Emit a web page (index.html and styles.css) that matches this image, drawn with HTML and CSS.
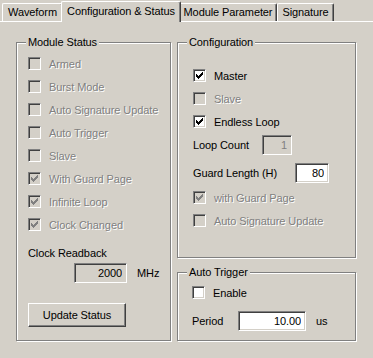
FILE: index.html
```html
<!DOCTYPE html>
<html lang="en">
<head>
    <meta charset="UTF-8">
    <meta name="viewport" content="width=device-width, initial-scale=1.0">
    <title>Configuration &amp; Status</title>
    <link rel="stylesheet" href="styles.css">
</head>
<body>
    <div class="tabs">
        <div class="tab tab-wave">Waveform</div>
        <div class="tab tab-conf active">Configuration &amp; Status</div>
        <div class="tab tab-mod">Module Parameter</div>
        <div class="tab tab-sig">Signature</div>
    </div>

    <div class="page">
        <div class="group status">
            <span class="legend">Module Status</span>
            <div class="check off"><span class="box"></span>Armed</div>
            <div class="check off"><span class="box"></span>Burst Mode</div>
            <div class="check off"><span class="box"></span>Auto Signature Update</div>
            <div class="check off"><span class="box"></span>Auto Trigger</div>
            <div class="check off"><span class="box"></span>Slave</div>
            <div class="check off"><span class="box"><svg class="tick" width="7" height="7" viewBox="0 0 7 7"><path d="M0 2h1v3H0zM1 3h1v3H1zM2 4h1v3H2zM3 3h1v3H3zM4 2h1v3H4zM5 1h1v3H5zM6 0h1v3H6z"/></svg></span>With Guard Page</div>
            <div class="check off"><span class="box"><svg class="tick" width="7" height="7" viewBox="0 0 7 7"><path d="M0 2h1v3H0zM1 3h1v3H1zM2 4h1v3H2zM3 3h1v3H3zM4 2h1v3H4zM5 1h1v3H5zM6 0h1v3H6z"/></svg></span>Infinite Loop</div>
            <div class="check off"><span class="box"><svg class="tick" width="7" height="7" viewBox="0 0 7 7"><path d="M0 2h1v3H0zM1 3h1v3H1zM2 4h1v3H2zM3 3h1v3H3zM4 2h1v3H4zM5 1h1v3H5zM6 0h1v3H6z"/></svg></span>Clock Changed</div>

            <div class="readback-label">Clock Readback</div>
            <div class="readback-row">
                <input class="field readonly" id="clockReadback" type="text" value="2000" readonly>
                <span class="unit">MHz</span>
            </div>
            <button class="btn" onclick="updateStatus()">Update Status</button>
        </div>

        <div class="col">
            <div class="group config">
                <span class="legend">Configuration</span>
                <div class="check"><span class="box on"><svg class="tick" width="7" height="7" viewBox="0 0 7 7"><path d="M0 2h1v3H0zM1 3h1v3H1zM2 4h1v3H2zM3 3h1v3H3zM4 2h1v3H4zM5 1h1v3H5zM6 0h1v3H6z"/></svg></span>Master</div>
                <div class="check off"><span class="box"></span>Slave</div>
                <div class="check"><span class="box on"><svg class="tick" width="7" height="7" viewBox="0 0 7 7"><path d="M0 2h1v3H0zM1 3h1v3H1zM2 4h1v3H2zM3 3h1v3H3zM4 2h1v3H4zM5 1h1v3H5zM6 0h1v3H6z"/></svg></span>Endless Loop</div>
                <div class="field-row loop-row">
                    <span class="field-label loop-label">Loop Count</span>
                    <input class="field disabled loop-field" type="text" value="1" readonly>
                </div>
                <div class="field-row guard-row">
                    <span class="field-label guard-label">Guard Length (H)</span>
                    <input class="field guard-field" type="text" value="80">
                </div>
                <div class="check off guard-page"><span class="box"><svg class="tick" width="7" height="7" viewBox="0 0 7 7"><path d="M0 2h1v3H0zM1 3h1v3H1zM2 4h1v3H2zM3 3h1v3H3zM4 2h1v3H4zM5 1h1v3H5zM6 0h1v3H6z"/></svg></span>with Guard Page</div>
                <div class="check off"><span class="box"></span>Auto Signature Update</div>
            </div>

            <div class="group trigger">
                <span class="legend">Auto Trigger</span>
                <div class="check"><span class="box on"></span>Enable</div>
                <div class="field-row period-row">
                    <span class="field-label period-label">Period</span>
                    <input class="field period-field" type="text" value="10.00">
                    <span class="unit">us</span>
                </div>
            </div>
        </div>
    </div>

    <script>
    function updateStatus() {
        document.getElementById('clockReadback').value = '2000';
    }
    </script>
</body>
</html>
```

FILE: styles.css
```css
body {
    font-family: 'Liberation Sans', Arial, sans-serif;
    font-size: 11px;
    letter-spacing: -0.1px;
    color: #000;
    background-color: #d4d0c8;
    margin: 0;
    padding: 0;
    width: 373px;
    height: 358px;
    overflow: hidden;
}

/* tab strip */
.tabs {
    display: flex;
    align-items: flex-end;
    height: 21px;
    padding-left: 2px;
}

.tab {
    box-sizing: border-box;
    height: 18px;
    border-left: 1px solid #fff;
    border-top: 1px solid #fff;
    border-right: 1px solid #404040;
    border-radius: 2px 2px 0 0;
    box-shadow: inset -1px 0 0 #808080;
    text-align: center;
    line-height: 17px;
    white-space: nowrap;
    background-color: #d4d0c8;
}

.tab-wave { width: 61px; }
.tab-conf { width: 116px; }
.tab-mod { width: 98px; }
.tab-sig { width: 57px; }

.tab.active {
    position: relative;
    z-index: 1;
    width: 120px;
    height: 21px;
    margin: 0 -2px -1px -2px;
    line-height: 19px;
}

.page {
    border-top: 1px solid #fff;
    display: flex;
    gap: 6px;
    padding: 20px 0 0 16px;
}

/* etched group boxes */
.group {
    position: relative;
    box-sizing: border-box;
    border: 1px solid #808080;
    box-shadow: inset 1px 1px 0 #fff, 1px 1px 0 #fff;
}

.legend {
    position: absolute;
    top: -7px;
    left: 9px;
    padding: 0 2px;
    line-height: 13px;
    background-color: #d4d0c8;
}

.status {
    width: 155px;
    height: 299px;
    padding: 14px 0 0 11px;
}

.col {
    display: flex;
    flex-direction: column;
}

.config {
    width: 179px;
    height: 216px;
    padding: 26px 0 0 15px;
}

.trigger {
    width: 179px;
    height: 69px;
    margin-top: 14px;
    padding: 13px 0 0 14px;
}

/* checkboxes */
.check {
    display: flex;
    align-items: center;
    gap: 8px;
    height: 13px;
    margin-bottom: 10px;
    white-space: nowrap;
}

.box {
    box-sizing: border-box;
    width: 13px;
    height: 13px;
    flex: none;
    display: flex;
    align-items: center;
    justify-content: center;
    border-top: 1px solid #808080;
    border-left: 1px solid #808080;
    border-bottom: 1px solid #fff;
    border-right: 1px solid #fff;
    box-shadow: inset 1px 1px 0 #404040, inset -1px -1px 0 #d4d0c8;
    background-color: #fff;
}

.tick {
    display: block;
    shape-rendering: crispEdges;
    fill: #000;
}

.check.off {
    color: #808080;
    text-shadow: 1px 1px 0 #fff;
}

.check.off .box {
    background-color: #d4d0c8;
}

.check.off .tick {
    fill: #808080;
}

/* text fields */
.field {
    box-sizing: border-box;
    height: 20px;
    margin: 0;
    padding: 0 4px 0 2px;
    font-family: inherit;
    font-size: 11px;
    letter-spacing: -0.1px;
    text-align: right;
    color: #000;
    background-color: #fff;
    border-top: 1px solid #808080;
    border-left: 1px solid #808080;
    border-bottom: 1px solid #fff;
    border-right: 1px solid #fff;
    box-shadow: inset 1px 1px 0 #404040, inset -1px -1px 0 #d4d0c8;
    outline: none;
}

.field.readonly {
    background-color: #d4d0c8;
}

.field.disabled {
    background-color: #d4d0c8;
    color: #808080;
}

.readback-label {
    line-height: 13px;
    margin-top: 16px;
}

.readback-row {
    display: flex;
    align-items: center;
    margin: 3px 0 0 46px;
}

.readback-row .field {
    width: 53px;
}

.unit {
    margin-left: 10px;
}

.btn {
    box-sizing: border-box;
    display: block;
    width: 98px;
    height: 24px;
    margin-top: 20px;
    padding: 0;
    font-family: inherit;
    font-size: 11px;
    letter-spacing: -0.1px;
    color: #000;
    background-color: #d4d0c8;
    border-top: 1px solid #fff;
    border-left: 1px solid #fff;
    border-bottom: 1px solid #404040;
    border-right: 1px solid #404040;
    box-shadow: inset -1px -1px 0 #808080;
    cursor: pointer;
}

.field-row {
    display: flex;
    align-items: center;
    height: 20px;
    white-space: nowrap;
}

.loop-row { margin-top: -3px; }
.loop-label { width: 69px; }
.loop-field { width: 30px; }

.guard-row { margin-top: 8px; }
.guard-label { width: 102px; }
.guard-field { width: 34px; }

.guard-page { margin-top: 8px; }

.period-row { margin-top: 12px; }
.period-label { width: 46px; }
.period-field { width: 68px; }
```
